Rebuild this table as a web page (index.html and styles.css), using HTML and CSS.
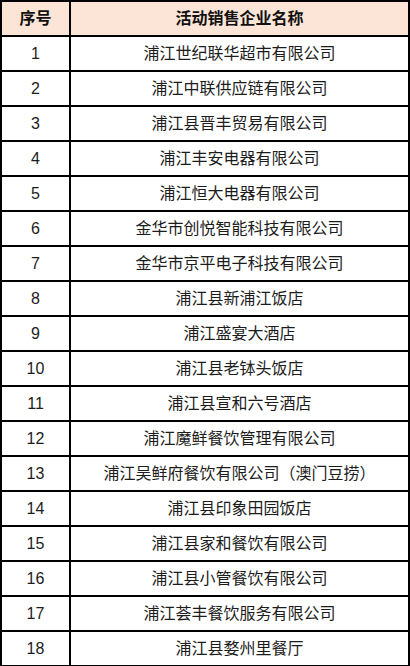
FILE: index.html
```html
<!DOCTYPE html>
<html lang="zh">
<head>
<meta charset="utf-8">
<link rel="stylesheet" href="styles.css">
</head>
<body>
<table class="list">
  <thead>
    <tr><th class="num">序号</th><th class="name">活动销售企业名称</th></tr>
  </thead>
  <tbody>
    <tr><td class="num">1</td><td>浦江世纪联华超市有限公司</td></tr>
    <tr><td class="num">2</td><td>浦江中联供应链有限公司</td></tr>
    <tr><td class="num">3</td><td>浦江县晋丰贸易有限公司</td></tr>
    <tr><td class="num">4</td><td>浦江丰安电器有限公司</td></tr>
    <tr><td class="num">5</td><td>浦江恒大电器有限公司</td></tr>
    <tr><td class="num">6</td><td>金华市创悦智能科技有限公司</td></tr>
    <tr><td class="num">7</td><td>金华市京平电子科技有限公司</td></tr>
    <tr><td class="num">8</td><td>浦江县新浦江饭店</td></tr>
    <tr><td class="num">9</td><td>浦江盛宴大酒店</td></tr>
    <tr><td class="num">10</td><td>浦江县老钵头饭店</td></tr>
    <tr><td class="num">11</td><td>浦江县宣和六号酒店</td></tr>
    <tr><td class="num">12</td><td>浦江魔鲜餐饮管理有限公司</td></tr>
    <tr><td class="num">13</td><td>浦江吴鲜府餐饮有限公司（澳门豆捞）</td></tr>
    <tr><td class="num">14</td><td>浦江县印象田园饭店</td></tr>
    <tr><td class="num">15</td><td>浦江县家和餐饮有限公司</td></tr>
    <tr><td class="num">16</td><td>浦江县小管餐饮有限公司</td></tr>
    <tr><td class="num">17</td><td>浦江荟丰餐饮服务有限公司</td></tr>
    <tr><td class="num">18</td><td>浦江县婺州里餐厅</td></tr>
  </tbody>
</table>
</body>
</html>
```

FILE: styles.css
```css
html, body {
  margin: 0;
  padding: 0;
  background: #ffffff;
}

.list {
  width: 410px;
  border-collapse: collapse;
  table-layout: fixed;
  font-family: "Liberation Sans", "Noto Sans CJK SC", sans-serif;
  font-size: 16px;
  color: #1c1c1c;
}

.list th,
.list td {
  border: 2px solid #000;
  height: 33px;
  padding: 0;
  text-align: center;
  vertical-align: middle;
  line-height: 20px;
}

.list th {
  background: #fce5d6;
  font-weight: bold;
  color: #111;
}

.list .num {
  width: 67px;
}
```
